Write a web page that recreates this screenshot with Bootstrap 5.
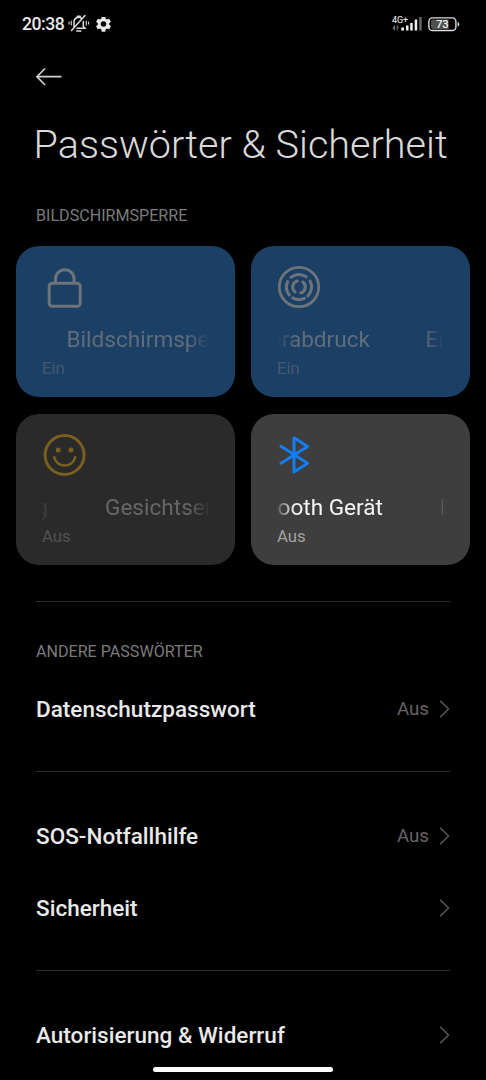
<!DOCTYPE html>
<html lang="de" data-bs-theme="dark">
<head>
<meta charset="utf-8">
<meta name="viewport" content="width=device-width, initial-scale=1">
<title>Passwörter &amp; Sicherheit</title>
<link href="https://cdn.jsdelivr.net/npm/bootstrap@5.3.0/dist/css/bootstrap.min.css" rel="stylesheet">
<style>
body{background:#000;color:#e9e9e9;font-family:Roboto,sans-serif;height:1080px;overflow:hidden;line-height:1.2}
svg{display:block;flex:none}
.status-bar{height:48px;padding:0 26px 0 22px;color:#e8e8e8}
.clock{font-size:17.6px;font-weight:500;line-height:20px;width:46px;letter-spacing:-.5px}
.back-bar{height:56px;padding:18px 36px 0}
.page-title{font-size:39.6px;font-weight:300;line-height:48px;margin:17px 0 0 33.5px;color:#d9d9d9;white-space:nowrap}
.section-label{font-size:16.1px;font-weight:400;line-height:20px;color:#7b7b7b;margin:0 36px}
.tiles{display:grid;grid-template-columns:219px 219px;gap:17px 16px;padding:0 16px;margin-top:20px}
.tile{height:151px;border-radius:23px;padding:17px 26px 0;background:#3e3e3e;color:#f5f5f5}
.tile-on{background:#1c3f65;color:#5f6d7b}
.tile-off{background:#2a2a2a;color:#666}
.tile-icon{height:48px}
.ticker{width:166px;height:30px;margin-top:14px;font-size:22.6px;line-height:30px;white-space:nowrap;
 -webkit-mask-image:linear-gradient(90deg,transparent,#000 18px,#000 calc(100% - 20px),rgba(0,0,0,.05));mask-image:linear-gradient(90deg,transparent,#000 18px,#000 calc(100% - 20px),rgba(0,0,0,.05))}
.ticker-off-left{-webkit-mask-image:linear-gradient(90deg,rgba(0,0,0,.15),#000 18px,#000 calc(100% - 20px),rgba(0,0,0,.15));mask-image:linear-gradient(90deg,rgba(0,0,0,.15),#000 18px,#000 calc(100% - 20px),rgba(0,0,0,.15))}
.ticker-next{margin-left:57px}
.tile-state{font-size:16.8px;line-height:20px;margin-top:3px;color:#a2a2a2}
.tile-on .tile-state{color:#435a71}
.tile-off .tile-state{color:#525252}
.rule{height:1px;background:#2e2e2e;margin:0 36px}
.entry{height:72px;padding:0 36px}
.entry-name{font-size:22.5px;font-weight:500;letter-spacing:.02px}
.entry-state{font-size:18.7px;color:#656565;margin-right:10px}
.home-bar{width:180px;height:5px;background:#fff;bottom:8px;left:153px}
</style>
</head>
<body class="position-relative">
<header class="status-bar d-flex align-items-center">
  <span class="clock">20:38</span>
  <svg width="22" height="20" viewBox="0 0 22 20" fill="none" stroke="#ddd" stroke-width="1.5" stroke-linecap="round"><path d="M6 13.5V8a4.6 4.6 0 0 1 7.5-3.7M15.3 7.5v5l1.7 1.8H9M3.5 16.5 17 1.5"/><path d="M8.8 17h4" stroke-width="1.6"/><path d="M3.2 7v4M18.3 7v4M1 8v2M20.6 8v2" stroke-width="1.1"/><path d="M9.5 2.5h2.5" stroke-width="2"/></svg>
  <svg style="margin-left:6px" width="15" height="15" viewBox="2.5 3 19 19" fill="#e8e8e8"><path d="M19.14 12.94c.04-.3.06-.61.06-.94s-.02-.64-.07-.94l2.03-1.58a.49.49 0 0 0 .12-.61l-1.92-3.32a.488.488 0 0 0-.59-.22l-2.39.96c-.5-.38-1.03-.7-1.62-.94l-.36-2.54a.484.484 0 0 0-.48-.41h-3.84c-.24 0-.43.17-.47.41l-.36 2.54c-.59.24-1.13.57-1.62.94l-2.39-.96c-.22-.08-.47 0-.59.22L2.74 8.87c-.12.21-.08.47.12.61l2.03 1.58c-.05.3-.09.63-.09.94s.02.64.07.94l-2.03 1.58a.49.49 0 0 0-.12.61l1.92 3.32c.12.22.37.29.59.22l2.39-.96c.5.38 1.03.7 1.62.94l.36 2.54c.05.24.24.41.48.41h3.84c.24 0 .44-.17.47-.41l.36-2.54c.59-.24 1.13-.56 1.62-.94l2.39.96c.22.08.47 0 .59-.22l1.92-3.32a.49.49 0 0 0-.12-.61zM12 15.5a3.5 3.5 0 1 1 0-7 3.5 3.5 0 0 1 0 7"/></svg>
  <svg class="ms-auto" width="31" height="18" viewBox="0 0 31 18"><text x="1" y="7.5" font-size="9.5" fill="#ddd" stroke="#ddd" stroke-width=".2" textLength="16" lengthAdjust="spacingAndGlyphs">4G+</text><path d="M3.5 15.5v-5l-1.7 3h2.5M6.2 10.5v5M6.2 11q2.5 1 0 2.5" fill="none" stroke="#777" stroke-width=".9"/><path d="M10.3 12.5H13v3h-2.7zM15 10.5h2.5v5H15zM19.2 8h2.5v7.5h-2.5zM23.7 4.5h2.5v11h-2.5z" fill="#eee"/><path d="M28.2 2h2.5v13.5h-2.5z" fill="#666"/></svg>
  <svg width="32" height="16" viewBox="0 0 32 16" style="margin-left:6px;margin-top:-1px"><rect x=".9" y="1.9" width="27" height="12.6" rx="3.6" fill="none" stroke="#ddd" stroke-width="1.4"/><path d="M3 5.5a2 2 0 0 1 2-2h15.5v9.4H5a2 2 0 0 1-2-2z" fill="#505050"/><path d="M29.6 6q1.6 0 1.6 2.2t-1.6 2.2z" fill="#ddd"/><text x="14.4" y="12.1" font-size="10.8" fill="#fff" stroke="#fff" stroke-width=".2" text-anchor="middle">73</text></svg>
</header>
<div class="back-bar"><svg width="26" height="22" viewBox="0 0 26 22" fill="none" stroke="#cfcfcf" stroke-width="1.7"><path d="M25.5 10.7H1.3M9 2.5.9 10.7 9 19"/></svg></div>
<h1 class="page-title">Passwörter &amp; Sicherheit</h1>
<h2 class="section-label" style="margin-top:37px">BILDSCHIRMSPERRE</h2>
<main>
<section class="tiles">
  <article class="tile tile-on">
    <div class="tile-icon"><svg width="46" height="48" viewBox="0 0 46 48" fill="none" stroke="#6d7479" stroke-width="3"><rect x="7.2" y="20.2" width="31" height="23" rx="3"/><path d="M13.5 20v-4a9.3 9.3 0 0 1 18.6 0v4"/></svg></div>
    <div class="ticker d-flex overflow-hidden"><span style="margin-left:24.5px">Bildschirmsperre</span></div>
    <div class="tile-state">Ein</div>
  </article>
  <article class="tile tile-on">
    <div class="tile-icon"><svg width="46" height="48" viewBox="0 0 46 48" fill="none" stroke="#6d7479" stroke-width="3" stroke-linecap="round"><circle cx="22" cy="24" r="19.7" stroke-width="2.8"/><path d="M13.9 14.3A12.6 12.6 0 0 1 29.2 13.7M33.1 18.1A12.6 12.6 0 0 1 30.9 32.9M27.3 35.4A12.6 12.6 0 0 1 15.7 34.9M12.3 32A12.6 12.6 0 0 1 10.6 18.6" /><path d="M20.2 18A6.3 6.3 0 0 0 18.1 29M23.8 30A6.3 6.3 0 0 0 25.8 19"/></svg></div>
    <div class="ticker d-flex overflow-hidden"><span class="d-flex justify-content-end flex-shrink-0" style="width:93px"><span>Entsperren mit Fingerabdruck</span></span><span class="ticker-next" style="margin-left:55.5px">Entsperren mit Fingerabdruck</span></div>
    <div class="tile-state">Ein</div>
  </article>
  <article class="tile tile-off">
    <div class="tile-icon"><svg width="46" height="48" viewBox="0 0 46 48" fill="none" stroke="#7a601f" stroke-width="3" stroke-linecap="round"><circle cx="22.6" cy="24" r="19.5"/><path d="M12.3 26.2c2.2 11 18.4 11 20.8 0" stroke-width="2.6"/><g fill="#7a601f" stroke="none"><circle cx="16.2" cy="19" r="2.5"/><circle cx="28.9" cy="19" r="2.5"/></g></svg></div>
    <div class="ticker ticker-off-left d-flex overflow-hidden"><span class="d-flex justify-content-end flex-shrink-0" style="width:6px"><span>Gesichtsentsperrung</span></span><span class="ticker-next">Gesichtsentsperrung</span></div>
    <div class="tile-state">Aus</div>
  </article>
  <article class="tile">
    <div class="tile-icon"><svg width="46" height="48" viewBox="0 0 46 48" fill="none" stroke="#147df0" stroke-width="3" stroke-linecap="round" stroke-linejoin="round"><path d="M4 15.3 30.6 32.2 17 41V6.8l13.6 8.7L4 32.2"/></svg></div>
    <div class="ticker ticker-off-left d-flex overflow-hidden"><span class="d-flex justify-content-end flex-shrink-0" style="width:106px"><span>Bluetooth Gerät</span></span><span class="ticker-next">Bluetooth Gerät</span></div>
    <div class="tile-state">Aus</div>
  </article>
</section>
<div class="rule" style="margin-top:36px"></div>
<h2 class="section-label" style="margin-top:40px;margin-bottom:11px">ANDERE PASSWÖRTER</h2>
<div class="entry d-flex align-items-center"><span class="entry-name me-auto">Datenschutzpasswort</span><span class="entry-state">Aus</span><svg width="11" height="18" viewBox="0 0 11 18" fill="none" stroke="#5c5c5c" stroke-width="1.4"><path d="m1.2.8 8.3 8.2-8.3 8.2"/></svg></div>
<div class="rule" style="margin-top:26px;margin-bottom:28px"></div>
<div class="entry d-flex align-items-center"><span class="entry-name me-auto">SOS-Notfallhilfe</span><span class="entry-state">Aus</span><svg width="11" height="18" viewBox="0 0 11 18" fill="none" stroke="#5c5c5c" stroke-width="1.4"><path d="m1.2.8 8.3 8.2-8.3 8.2"/></svg></div>
<div class="entry d-flex align-items-center"><span class="entry-name me-auto">Sicherheit</span><svg width="11" height="18" viewBox="0 0 11 18" fill="none" stroke="#5c5c5c" stroke-width="1.4"><path d="m1.2.8 8.3 8.2-8.3 8.2"/></svg></div>
<div class="rule" style="margin-top:26px;margin-bottom:28px"></div>
<div class="entry d-flex align-items-center"><span class="entry-name me-auto">Autorisierung &amp; Widerruf</span><svg width="11" height="18" viewBox="0 0 11 18" fill="none" stroke="#5c5c5c" stroke-width="1.4"><path d="m1.2.8 8.3 8.2-8.3 8.2"/></svg></div>
</main>
<div class="home-bar position-absolute rounded-pill"></div>
<script src="https://cdn.jsdelivr.net/npm/bootstrap@5.3.0/dist/js/bootstrap.bundle.min.js"></script>
</body>
</html>
